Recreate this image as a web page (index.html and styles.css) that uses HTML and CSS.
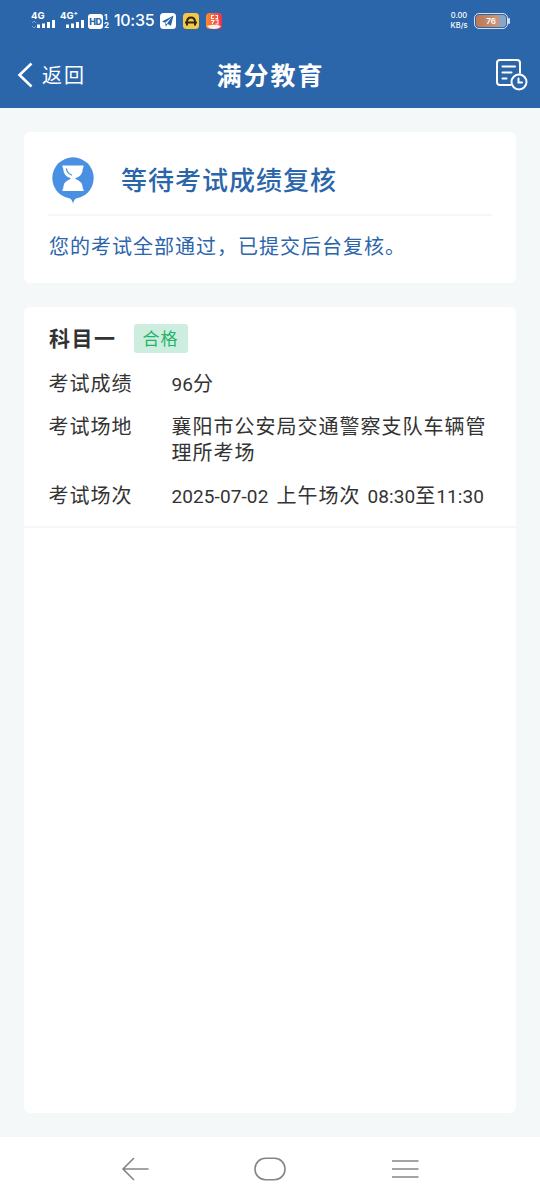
FILE: index.html
```html
<!DOCTYPE html>
<html lang="zh-CN">
<head>
<meta charset="utf-8">
<title>满分教育</title>
<link rel="stylesheet" href="styles.css">
</head>
<body>
<header class="top">
  <div class="status">
    <div class="signal"><span class="net">4G</span>
      <svg width="26" height="9" viewBox="0 0 26 9"><path d="M2 3l2-2 2 2M2 6l2 2 2-2" fill="none" stroke="#7fa5d5"/><path d="M7 4.500h3v3.500H7zM12 3.500h3v4.500h-3zM17 2h3v6h-3zM22 0h3v8h-3z" fill="#fff"/></svg>
    </div>
    <div class="signal second"><span class="net">4G⁺</span>
      <svg width="26" height="9" viewBox="0 0 26 9"><path d="M7 4.500h3v3.500H7zM12 3.500h3v4.500h-3zM17 2h3v6h-3zM22 0h3v8h-3z" fill="#fff"/></svg>
    </div>
    <span class="hd">HD</span><span class="sims"><span>1</span><span>2</span></span>
    <span class="clock">10:35</span>
    <svg class="app" width="16" height="16" viewBox="0 0 16 16"><rect width="16" height="16" rx="3.5" fill="#fff"/><path d="M13.500 2.500L2 8.500l3.300 1.300L11.800 4 7 10.500l4 2.200z" fill="#2864a8"/><path d="M5.300 10l.3 3.500 2-2z" fill="#2864a8"/></svg>
    <svg class="app" width="16" height="16" viewBox="0 0 16 16"><rect width="16" height="16" rx="3.5" fill="#f6c945"/><path d="M4 12.500V9q0-4.500 4-4.500T12 9v3.500" fill="none" stroke="#2e2918" stroke-width="2"/><path d="M2 9.500h12" stroke="#2e2918" stroke-width="2"/></svg>
    <svg class="app" width="16" height="16" viewBox="0 0 16 16"><defs><linearGradient id="warm"><stop stop-color="#ff8a35"/><stop offset="1" stop-color="#ee3045"/></linearGradient></defs><rect width="16" height="16" rx="3.500" fill="url(#warm)"/><path d="M8 2.500H5.500v3H8M9.500 2.500h2v3h-2M5 7.500h3l-2 3.500M9.500 7h2.500v4H9.500" fill="none" stroke="#fff" stroke-width="1.100"/><path d="M1 13q7-2.500 14 0-2 3-7 3t-7-3z" fill="#fff1e8"/></svg>
    <span class="speed"><span>0.00</span><span>KB/s</span></span>
    <span class="battery"><span class="cell">76</span></span>
  </div>
  <nav class="bar">
    <div class="back">
      <svg width="17" height="28" viewBox="0 0 17 28"><path d="M14.500 2.500L2.500 14l12 11.500" fill="none" stroke="#fff" stroke-width="2.600"/></svg>
      <span>返回</span>
    </div>
    <h1>满分教育</h1>
    <svg class="record" width="34" height="34" viewBox="0 0 34 34" fill="none" stroke="#fff" stroke-width="2" stroke-linecap="round"><path d="M16.500 28H6q-3 0-3-3V6q0-3 3-3h17q3 0 3 3v10M8.500 9.500H21M8.500 15.500h9M8.500 21.500h4"/><circle cx="25" cy="25" r="7.500"/><path d="M24.500 21.500v4h3.500"/></svg>
  </nav>
</header>
<main class="content">
  <section class="card notice">
    <div class="notice-head">
      <svg width="42" height="48" viewBox="0 0 42 48"><path d="M16 40q4 1.500 5 7 1-5.500 5-7z" fill="#4a90e2"/><circle cx="21" cy="21" r="20.700" fill="#4a90e2"/><path d="M10.500 8.500h21v2H31q-.5 9-7.500 10.500v1Q30.500 24 31 32h.5v2h-21v-2h.5q.5-8 7.500-10v-1Q11.500 19.500 11 10.500h-.5z" fill="#fff"/><path d="M14.500 12q.5 4 5 6" fill="none" stroke="#4a90e2" stroke-width="1.300" stroke-linecap="round"/></svg>
      <h2>等待考试成绩复核</h2>
    </div>
    <p>您的考试全部通过，已提交后台复核。</p>
  </section>
  <section class="card results">
    <div class="exam">
      <div class="subject"><h3>科目一</h3><span class="badge">合格</span></div>
      <dl>
        <dt>考试成绩</dt><dd><span class="num">96</span>分</dd>
        <dt>考试场地</dt><dd>襄阳市公安局交通警察支队车辆管理所考场</dd>
        <dt>考试场次</dt><dd class="session"><span class="num">2025-07-02</span><span class="period">上午场次</span><span class="num">08:30</span>至<span class="num">11:30</span></dd>
      </dl>
    </div>
  </section>
</main>
<footer class="system-nav">
  <svg width="28" height="24" viewBox="0 0 28 24"><path d="M12.500 1.500L2 12l10.500 10.500M2 12h25" fill="none" stroke="#858585" stroke-width="1.600" stroke-linecap="round"/></svg>
  <svg width="32" height="24" viewBox="0 0 32 24"><rect x="1" y="1.300" width="30" height="21.400" rx="10.500" fill="none" stroke="#858585" stroke-width="1.600"/></svg>
  <svg width="28" height="24" viewBox="0 0 28 24"><path d="M1 4h26.500M1 12h26.500M1 20h26.500" stroke="#858585" stroke-width="1.700"/></svg>
</footer>
</body>
</html>
```
FILE: styles.css
```css
* { box-sizing: border-box; }
body {
  margin: 0;
  height: 1200px;
  display: flex;
  flex-direction: column;
  background: #f4f8f9;
  color: #333;
  font-family: "Noto Sans CJK SC", sans-serif;
  overflow: hidden;
}
h1, h2, h3, p, dl, dd { margin: 0; }
svg { display: block; flex: none; }
.top { height: 108px; background: #2b65aa; color: #fff; flex: none; }
.status { height: 40px; display: flex; align-items: center; padding: 2px 32px 0 31px; font-family: Inter, sans-serif; white-space: nowrap; }
.signal { width: 26px; height: 18px; margin-top: -2px; }
.signal.second { margin-left: 3px; }
.signal svg { margin-left: -1px; }
.net { display: block; height: 9px; font-size: 9.500px; line-height: 9px; font-weight: 700; }
.hd { width: 15px; height: 15px; margin-left: 2px; border-radius: 3px; background: #fff; color: #2b65aa; font-size: 9px; line-height: 15px; font-weight: 800; text-align: center; letter-spacing: -.3px; }
.sims { display: flex; flex-direction: column; width: 7px; padding-left: 1px; font-size: 8px; line-height: 8px; font-weight: 700; }
.clock { width: 41px; margin: -2px 0 0 4px; font-size: 16px; line-height: 20px; font-weight: 500; letter-spacing: -.3px; }
.app { margin-left: 5px; }
.app + .app { margin-left: 7px; }
.speed { display: flex; flex-direction: column; width: 20px; margin-left: auto; text-align: center; font-size: 7.500px; line-height: 10px; font-weight: 500; }
.battery { position: relative; width: 34px; height: 16px; margin-left: 5px; padding: 1px; border: 1px solid #d4dfed; border-radius: 5px; }
.battery::after { content: ""; position: absolute; left: 33px; top: 4px; width: 2px; height: 6px; background: #d4dfed; border-radius: 1px; }
.cell { display: block; height: 12px; border-radius: 3px; background: linear-gradient(90deg, #bd7754 0, #cc967b 76%, #8da5c4 76%); font-size: 8px; line-height: 12px; font-weight: 600; text-align: center; }
.bar { height: 67px; display: grid; grid-template-columns: 120px 1fr 120px; align-items: center; padding: 0 12px 0 17px; }
.back { display: flex; align-items: center; gap: 8px; padding-top: 2px; font-size: 20px; line-height: 28px; letter-spacing: 2px; }
h1 { font-size: 25px; line-height: 36px; font-weight: 700; letter-spacing: 2px; text-align: center; margin-right: 4px; white-space: nowrap; }
.record { justify-self: end; }
.content { flex: 1; padding: 24px; display: flex; flex-direction: column; gap: 24px; }
.card { background: #fff; border-radius: 6px; }
.notice { height: 151px; padding: 0 24px; flex: none; }
.notice-head { height: 84px; display: flex; align-items: flex-start; gap: 27px; padding: 25px 4px 0 4px; border-bottom: 2px solid #f5f6f7; }
h2 { margin-top: 4px; color: #2b65aa; font-size: 26px; line-height: 36px; font-weight: 500; letter-spacing: 1px; white-space: nowrap; }
.notice p { padding: 16px 0 0 1px; color: #2b65aa; font-size: 20px; line-height: 28px; letter-spacing: 1px; white-space: nowrap; }
.results { flex: 1; }
.exam { height: 221px; padding: 16px 24px 0; border-bottom: 2px solid #f5f6f7; }
.subject { height: 30px; display: flex; align-items: center; }
h3 { width: 85.500px; padding-left: 1px; margin-top: -2px; font-size: 21px; line-height: 30px; font-weight: 700; letter-spacing: 1.500px; }
.badge { width: 54px; height: 29px; border-radius: 3px; background: #cdeede; color: #25b36a; text-align: center; font-size: 17px; line-height: 28px; letter-spacing: 1px; }
dl { display: grid; grid-template-columns: 123px 1fr; row-gap: 17px; margin-top: 16.500px; font-size: 20px; line-height: 26px; letter-spacing: 1px; }
dt, dd { position: relative; left: .5px; }
dd { width: 324px; }
.num { font-family: Roboto, sans-serif; font-size: 19px; line-height: 20px; letter-spacing: .1px; }
.session { white-space: nowrap; }
.period { margin: 0 7px 0 8px; }
.system-nav { height: 63px; flex: none; display: flex; justify-content: center; gap: 105px; padding-top: 20px; background: #fff; }
```
